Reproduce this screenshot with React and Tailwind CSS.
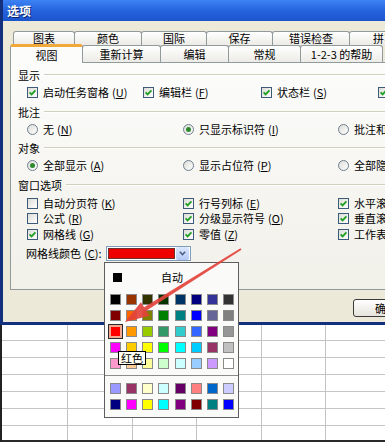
import React from 'react';

const palette = [
  ['#000000', '#993300', '#333300', '#003300', '#003366', '#000080', '#333399', '#333333'],
  ['#800000', '#FF6600', '#808000', '#008000', '#008080', '#0000FF', '#666699', '#808080'],
  ['#FF0000', '#FF9900', '#99CC00', '#339966', '#33CCCC', '#3366FF', '#800080', '#969696'],
  ['#FF00FF', '#FFCC00', '#FFFF00', '#00FF00', '#00FFFF', '#00CCFF', '#993366', '#C0C0C0'],
  ['#FF99CC', '#FFCC99', '#FFFF99', '#CCFFCC', '#CCFFFF', '#99CCFF', '#CC99FF', '#FFFFFF'],
];

const chartColors = [
  ['#9999FF', '#993366', '#FFFFCC', '#CCFFFF', '#660066', '#FF8080', '#0066CC', '#CCCCFF'],
  ['#000080', '#FF00FF', '#FFFF00', '#00FFFF', '#800080', '#800000', '#008080', '#0000FF'],
];

const Check = ({ on }) => (
  <span className="w-[11px] h-[11px] shrink-0 border border-[#3D5B78] bg-gradient-to-br from-[#DCDCD7] to-white flex items-center justify-center">
    {on && (
      <svg width="9" height="9" viewBox="0 0 9 9">
        <path d="M1.6 4.3 L3.6 6.4 L7.4 2.3" stroke="#21A121" strokeWidth="1.8" fill="none" />
      </svg>
    )}
  </span>
);

const Radio = ({ on }) => (
  <span className="w-[11px] h-[11px] shrink-0 rounded-full border border-[#6E7E8E] bg-gradient-to-br from-[#DCDCD7] to-white flex items-center justify-center">
    {on && <span className="w-[5px] h-[5px] rounded-full bg-[#2D8A2D]" />}
  </span>
);

const Label = ({ text, k }) => (
  <span className="ml-[5px] whitespace-nowrap">
    {text}
    <span className="ml-[3px]">
      (<span className="underline">{k}</span>)
    </span>
  </span>
);

const Section = ({ title, className = '' }) => (
  <div className={`h-[14px] flex items-center ${className}`}>
    <span className="whitespace-nowrap">{title}</span>
    <div className="flex-1 ml-[4px] border-t border-[#D0D0BF] border-b border-b-white" />
  </div>
);

// one row of options, each item has its own column width
const OptRow = ({ items, widths, radio, className = '' }) => (
  <div className={`h-[14px] ml-[9px] flex items-center ${className}`}>
    {items.map((it, i) => (
      <div key={it.t} className="flex items-center shrink-0" style={{ width: widths[i] }}>
        {radio ? <Radio on={it.on} /> : <Check on={it.on} />}
        <Label text={it.t} k={it.k} />
      </div>
    ))}
  </div>
);

const Tab = ({ label, w }) => (
  <div
    className="h-full shrink-0 -mr-px border border-b-0 border-[#919B9C] rounded-t-[3px] bg-gradient-to-b from-white to-[#ECEBE6] flex items-center justify-center"
    style={{ width: w }}
  >
    {label}
  </div>
);

const Swatch = ({ c }) => (
  <div className="h-[16px] flex items-center justify-center">
    <span className="w-[11px] h-[11px] border border-[#8A8A8A]" style={{ background: c }} />
  </div>
);

export default function App() {
  const rows = [16, 17, 17, 17, 17, 17, 16];
  const cols = [66, 65, 64, 65, 64];

  return (
    <div className="relative w-[385px] h-[445px] overflow-hidden bg-white text-[11px] leading-none text-black font-['Noto_Sans_CJK_SC','Noto_Sans',sans-serif]">
      {/* dialog window */}
      <div className="w-[385px] h-[325px] flex flex-col border-l-[3px] border-b-[3px] border-[#12307E] bg-[#ECE9D8]">
        <div className="h-[21px] shrink-0 flex items-center pl-[4px] bg-gradient-to-b from-[#3D83F5] via-[#2663DD] to-[#1B55CC]">
          <span className="text-white font-bold text-[12px] [text-shadow:1px_1px_0_#0A246A]">选项</span>
        </div>

        <div className="flex-1 pt-[10px]">
          {/* back tab row */}
          <div className="h-[14px] ml-[10px] flex">
            <Tab label="图表" w={62} />
            <Tab label="颜色" w={68} />
            <Tab label="国际" w={66} />
            <Tab label="保存" w={67} />
            <Tab label="错误检查" w={78} />
            <Tab label="拼写" w={70} />
          </div>
          {/* front tab row */}
          <div className="h-[17px] ml-[7px] flex items-end">
            <div className="relative z-10 w-[73px] h-[19px] -mb-px -mr-px shrink-0 border border-b-0 border-[#919B9C] border-t-[3px] border-t-[#F2A93B] rounded-t-[3px] bg-[#FCFCFB] flex items-center justify-center">
              视图
            </div>
            <div className="h-[17px] flex">
              <Tab label="重新计算" w={79} />
              <Tab label="编辑" w={69} />
              <Tab label="常规" w={73} />
              <Tab label="1-2-3 的帮助" w={83} />
            </div>
          </div>

          {/* tab page */}
          <div className="h-[228px] w-[400px] ml-[7px] pt-[5px] pl-[7px] border border-[#919B9C] bg-gradient-to-b from-[#FCFCFB] to-[#F1F0E9]">
            <Section title="显示" />
            <OptRow
              className="mt-[3px]"
              widths={[116, 118, 117, 120]}
              items={[
                { t: '启动任务窗格', k: 'U', on: true },
                { t: '编辑栏', k: 'F', on: true },
                { t: '状态栏', k: 'S', on: true },
                { t: '任务栏中的窗口', k: 'W', on: true },
              ]}
            />
            <Section title="批注" className="mt-[6px]" />
            <OptRow
              radio
              className="mt-[3px]"
              widths={[156, 155, 120]}
              items={[
                { t: '无', k: 'N' },
                { t: '只显示标识符', k: 'I', on: true },
                { t: '批注和标识符', k: 'D' },
              ]}
            />
            <Section title="对象" className="mt-[5px]" />
            <OptRow
              radio
              className="mt-[3px]"
              widths={[156, 155, 120]}
              items={[
                { t: '全部显示', k: 'A', on: true },
                { t: '显示占位符', k: 'P' },
                { t: '全部隐藏', k: 'D' },
              ]}
            />
            <Section title="窗口选项" className="mt-[6px]" />
            <OptRow
              className="mt-[4px]"
              widths={[156, 155, 120]}
              items={[
                { t: '自动分页符', k: 'K' },
                { t: '行号列标', k: 'E', on: true },
                { t: '水平滚动条', k: 'Z', on: true },
              ]}
            />
            <OptRow
              className="mt-[1px]"
              widths={[156, 155, 120]}
              items={[
                { t: '公式', k: 'R' },
                { t: '分级显示符号', k: 'O', on: true },
                { t: '垂直滚动条', k: 'V', on: true },
              ]}
            />
            <OptRow
              className="mt-[2px]"
              widths={[156, 155, 120]}
              items={[
                { t: '网格线', k: 'G', on: true },
                { t: '零值', k: 'Z', on: true },
                { t: '工作表标签', k: 'B', on: true },
              ]}
            />
            {/* gridline colour */}
            <div className="mt-[4px] h-[16px] ml-[8px] flex items-center">
              <span className="w-[80px] whitespace-nowrap">
                网格线颜色<span className="ml-[3px]">(<span className="underline">C</span>):</span>
              </span>
              <div className="w-[85px] h-[15px] flex items-center border border-[#7F9DB9] bg-white">
                <span className="ml-[1px] w-[67px] h-[11px] bg-[#EE0000] border border-[#6B3030]" />
                <span className="ml-auto mr-px w-[13px] h-[13px] rounded-[2px] bg-gradient-to-b from-[#DDE8FE] to-[#B5C9F5] flex items-center justify-center">
                  <svg width="7" height="5" viewBox="0 0 7 5">
                    <path d="M0.8 0.8 L3.5 3.6 L6.2 0.8" stroke="#4D6185" strokeWidth="1.6" fill="none" />
                  </svg>
                </span>
              </div>
            </div>
          </div>

          {/* buttons */}
          <div className="mt-[9px] ml-[350px] flex">
            <div className="w-[66px] h-[18px] shrink-0 rounded-[3px] border border-[#3A3A3A] bg-gradient-to-b from-white to-[#E6E4DC] flex items-center justify-center">
              确定
            </div>
          </div>
        </div>
      </div>

      {/* worksheet behind the dialog */}
      <div className="border-l-2 border-[#222]">
        {rows.map((h, r) => (
          <div
            key={r}
            className={`flex ${r === rows.length - 1 ? 'border-b-2 border-b-[#2A2A2A]' : 'border-b border-b-[#C4C4C4]'}`}
            style={{ height: h }}
          >
            {cols.map((w, c) => (
              <div key={c} className="shrink-0 border-r border-[#C4C4C4]" style={{ width: w }} />
            ))}
            <div className="flex-1" />
          </div>
        ))}
      </div>

      {/* colour picker popup */}
      <div className="absolute z-20 left-[104px] top-[262px] w-[135px] h-[156px] border border-[#5E5E5E] bg-[#FAFAF8] pt-[6px]">
        <div className="h-[16px] flex items-center">
          <span className="ml-[8px] w-[9px] h-[9px] bg-black" />
          <span className="ml-[39px]">自动</span>
        </div>
        <div className="mt-[6px] ml-[2px] grid grid-cols-[repeat(8,16.25px)]">
          {palette.flat().map((c, i) =>
            i === 16 ? (
              <div key={i} className="h-[16px] flex items-center justify-center">
                <span className="w-[15px] h-[15px] border border-[#2A2A2A] bg-[#F2A994] flex items-center justify-center">
                  <span className="w-[9px] h-[9px] bg-[#FF0000]" />
                </span>
              </div>
            ) : (
              <Swatch key={i} c={c} />
            )
          )}
        </div>
        <div className="mt-[4px] mb-[4px] h-px bg-[#8C8C8C]" />
        <div className="ml-[2px] grid grid-cols-[repeat(8,16.25px)]">
          {chartColors.flat().map((c, i) => (
            <Swatch key={i} c={c} />
          ))}
        </div>
      </div>

      {/* tooltip */}
      <div className="absolute z-30 left-[118px] top-[351px] h-[14px] px-[2px] border border-black bg-[#FFFFF4] flex items-center">
        红色
      </div>

      {/* red arrow pointing at the red swatch */}
      <svg className="absolute inset-0 z-40 pointer-events-none" width="385" height="445" viewBox="0 0 385 445">
        <polygon
          points="240.5,248.2 241.5,249.8 146.3,310.7 149.5,315.7 125,322 140.9,302.3 144.1,307.3"
          fill="#E2433B"
          fillOpacity="0.92"
        />
      </svg>
    </div>
  );
}
